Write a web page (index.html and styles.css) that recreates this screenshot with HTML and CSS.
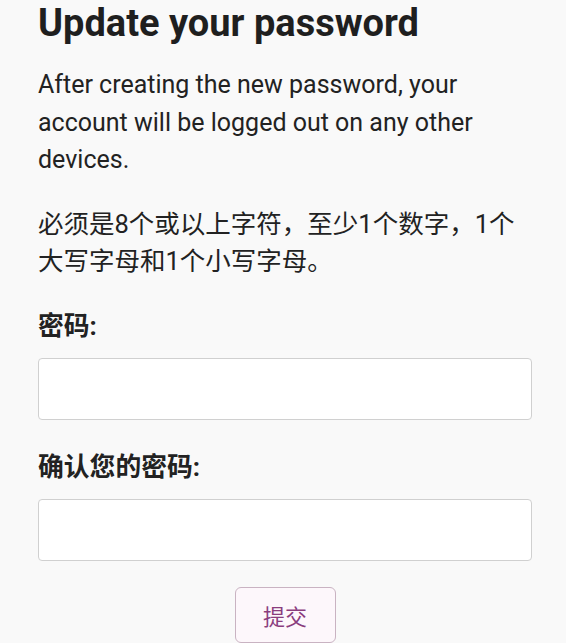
FILE: index.html
```html
<!DOCTYPE html>
<html lang="zh">
<head>
<meta charset="utf-8">
<link rel="stylesheet" href="styles.css">
</head>
<body>
<main class="page">
  <h1 class="title">Update your password</h1>
  <p class="text">After creating the new password, your account will be logged out on any other devices.</p>
  <p class="text text-cjk">必须是8个或以上字符，至少1个数字，1个大写字母和1个小写字母。</p>
  <form class="form">
    <label class="label" for="pw">密码:</label>
    <input class="field" id="pw" type="password">
    <label class="label" for="pw2">确认您的密码:</label>
    <input class="field field-last" id="pw2" type="password">
    <div class="actions"><button class="btn" type="button">提交</button></div>
  </form>
</main>
</body>
</html>
```

FILE: styles.css
```css
html, body {
  margin: 0;
  padding: 0;
  background: #f9f9f9;
}
body {
  font-family: Roboto, "Noto Sans CJK SC", sans-serif;
  color: #222;
}
.page {
  padding: 0 34px 0 38px;
}
.title {
  margin: 0;
  padding-top: 1px;
  font-size: 38px;
  font-weight: 700;
  line-height: 44px;
  color: #1f1f1f;
}
.text {
  margin: 21px 0 0;
  font-size: 25px;
  line-height: 37.5px;
}
.text-cjk {
  margin-top: 27px;
  font-size: 25.5px;
  line-height: 37.5px;
}
.form {
  display: flex;
  flex-direction: column;
  margin-top: 27px;
}
.label {
  font-size: 25.8px;
  font-weight: 700;
  line-height: 36px;
}
.field {
  box-sizing: border-box;
  height: 62px;
  margin: 14px 0 29px;
  border: 1.5px solid #d0d0d0;
  border-radius: 4px;
  background: #fff;
}
.field-last {
  margin-bottom: 26px;
}
.actions {
  display: flex;
  justify-content: center;
}
.btn {
  width: 101px;
  height: 56px;
  font-family: Roboto, "Noto Sans CJK SC", sans-serif;
  font-size: 22px;
  color: #8a3d7e;
  background: #fdf7fb;
  border: 1.5px solid #c9b3c2;
  border-radius: 6px;
  padding: 0;
}
```
